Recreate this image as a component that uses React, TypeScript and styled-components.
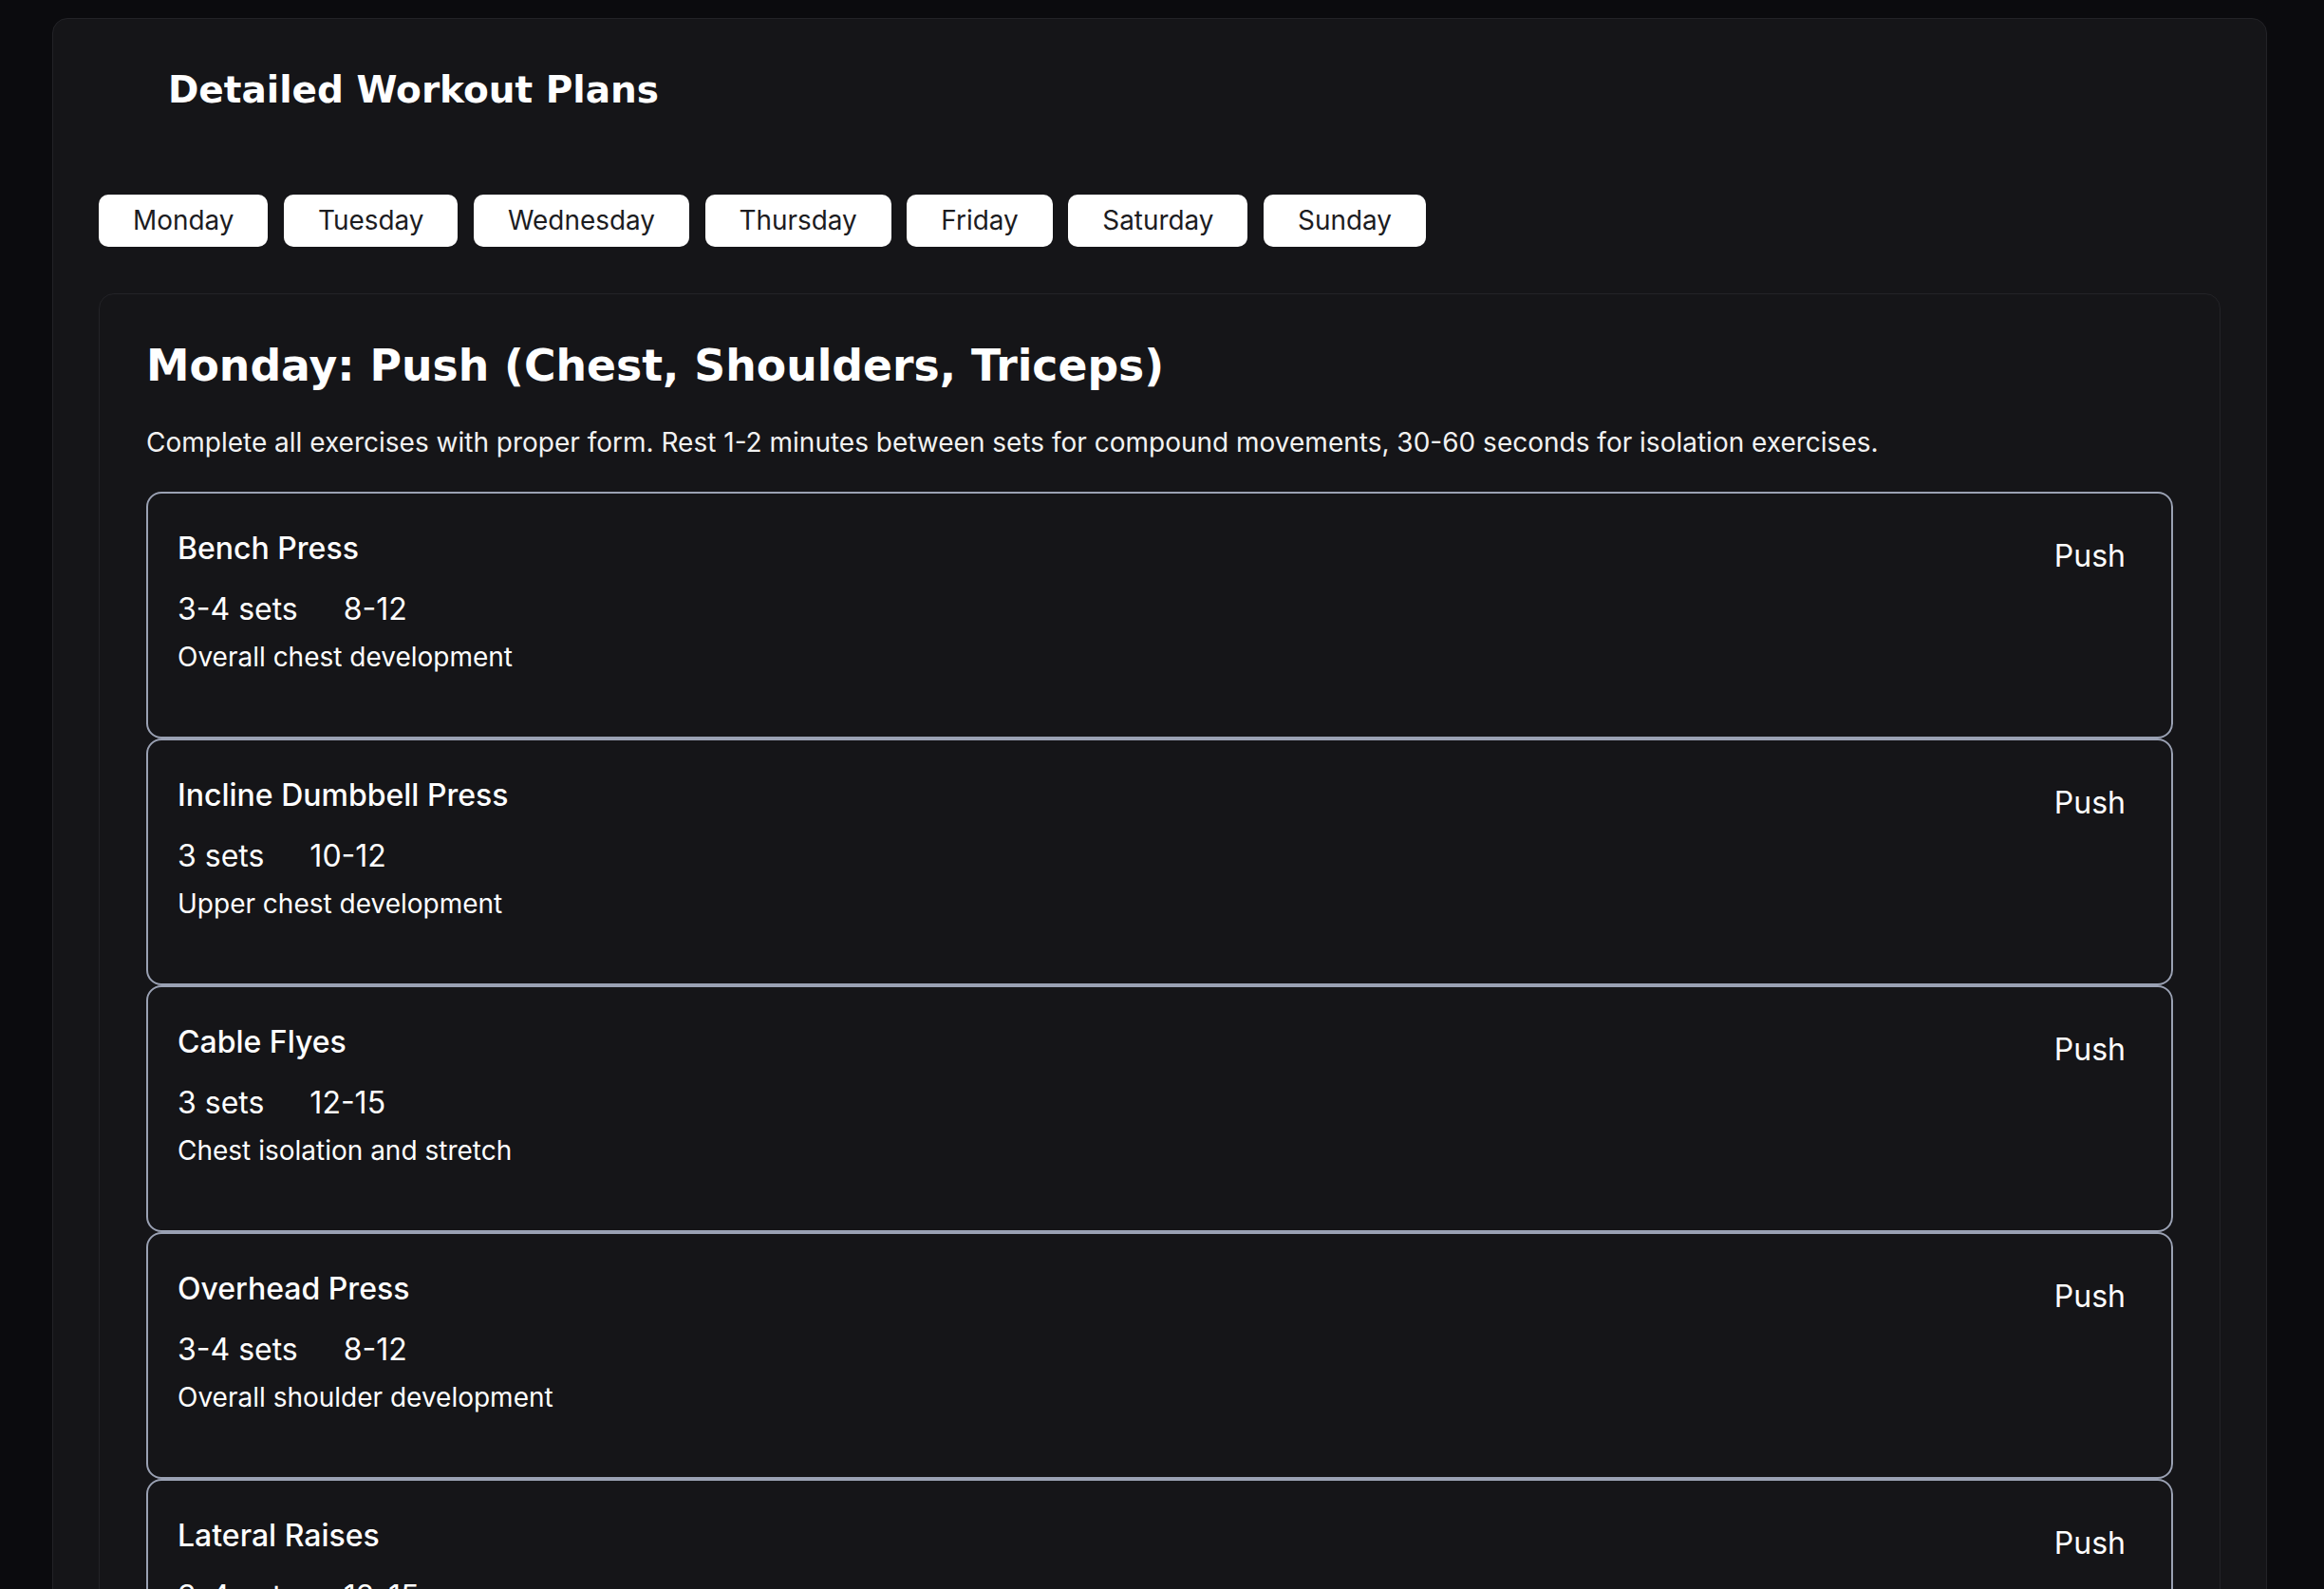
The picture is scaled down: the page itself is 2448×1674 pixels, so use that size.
import React from "react";
import styled, { createGlobalStyle } from "styled-components";

const GlobalStyle = createGlobalStyle`
  html, body {
    margin: 0;
    padding: 0;
    background: #0b0b0e;
    color: #ffffff;
    font-family: Inter, "Noto Sans", sans-serif;
  }
`;

const PageDiv = styled.div`
  padding: 19px 60px 0 55px;
  min-height: 1674px;
  box-sizing: border-box;
`;

const PanelDiv = styled.div`
  background: #151518;
  border: 1px solid #232327;
  border-radius: 16px;
  padding: 52px 48px 48px 48px;
`;

const Title = styled.h1`
  margin: 0 0 86px 73px;
  font-family: "DejaVu Sans", sans-serif;
  font-weight: 700;
  font-size: 39px;
  line-height: 1.2;
  color: #ffffff;
`;

const DayTabsDiv = styled.div`
  display: flex;
  gap: 16.6px;
  margin-bottom: 49px;
`;

const DayButton = styled.button`
  height: 55px;
  padding: 0 36px;
  border: none;
  border-radius: 10px;
  background: #ffffff;
  color: #1c1c1f;
  font-family: Inter, sans-serif;
  font-size: 27.9px;
  cursor: pointer;
`;

const DayCardDiv = styled.div`
  background: #151518;
  border: 1px solid #232327;
  border-radius: 16px;
  padding: 49px;
`;

const DayHeading = styled.h2`
  margin: 0 0 35px 0;
  font-family: "DejaVu Sans", sans-serif;
  font-weight: 700;
  font-size: 45.7px;
  line-height: 53px;
  color: #ffffff;
`;

const DayNote = styled.p`
  margin: 0 0 33.5px 0;
  font-size: 28px;
  line-height: 38px;
  color: #f2f2f2;
`;

const ExerciseListDiv = styled.div`
  display: flex;
  flex-direction: column;
`;

const ExerciseCard = styled.div`
  display: flex;
  justify-content: space-between;
  align-items: flex-start;
  height: 260px;
  box-sizing: border-box;
  padding: 34.5px 32px 32px 31px;
  border: 2px solid #9aa1b3;
  border-radius: 16px;
  background: #151518;
`;

const ExerciseName = styled.h3`
  margin: 0 0 19px 0;
  font-size: 32px;
  font-weight: 500;
  line-height: 45px;
  color: #ffffff;
`;

const VolumeRow = styled.div`
  display: flex;
  gap: 48px;
  margin-bottom: 8.5px;
  font-size: 32px;
  line-height: 45px;
  color: #ffffff;
`;

const Focus = styled.p`
  margin: 0;
  font-size: 28px;
  line-height: 40px;
  color: #ffffff;
`;

const TypeTag = styled.span`
  padding: 8px 16px;
  font-size: 32px;
  line-height: 45px;
  color: #ffffff;
`;

const days = [
  "Monday",
  "Tuesday",
  "Wednesday",
  "Thursday",
  "Friday",
  "Saturday",
  "Sunday",
];

const exercises = [
  { name: "Bench Press", sets: "3-4 sets", reps: "8-12", focus: "Overall chest development" },
  { name: "Incline Dumbbell Press", sets: "3 sets", reps: "10-12", focus: "Upper chest development" },
  { name: "Cable Flyes", sets: "3 sets", reps: "12-15", focus: "Chest isolation and stretch" },
  { name: "Overhead Press", sets: "3-4 sets", reps: "8-12", focus: "Overall shoulder development" },
  { name: "Lateral Raises", sets: "3-4 sets", reps: "12-15", focus: "Side delt width" },
  { name: "Tricep Pushdowns", sets: "3 sets", reps: "10-15", focus: "Triceps isolation" },
];

function App() {
  return (
    <PageDiv>
      <GlobalStyle />
      <PanelDiv>
        <Title>Detailed Workout Plans</Title>
        <DayTabsDiv>
          {days.map((d) => (
            <DayButton key={d}>{d}</DayButton>
          ))}
        </DayTabsDiv>
        <DayCardDiv>
          <DayHeading>Monday: Push (Chest, Shoulders, Triceps)</DayHeading>
          <DayNote>
            Complete all exercises with proper form. Rest 1-2 minutes between sets for compound
            movements, 30-60 seconds for isolation exercises.
          </DayNote>
          <ExerciseListDiv>
            {exercises.map((ex) => (
              <ExerciseCard key={ex.name}>
                <div>
                  <ExerciseName>{ex.name}</ExerciseName>
                  <VolumeRow>
                    <span>{ex.sets}</span>
                    <span>{ex.reps}</span>
                  </VolumeRow>
                  <Focus>{ex.focus}</Focus>
                </div>
                <TypeTag>Push</TypeTag>
              </ExerciseCard>
            ))}
          </ExerciseListDiv>
        </DayCardDiv>
      </PanelDiv>
    </PageDiv>
  );
}

export default App;
